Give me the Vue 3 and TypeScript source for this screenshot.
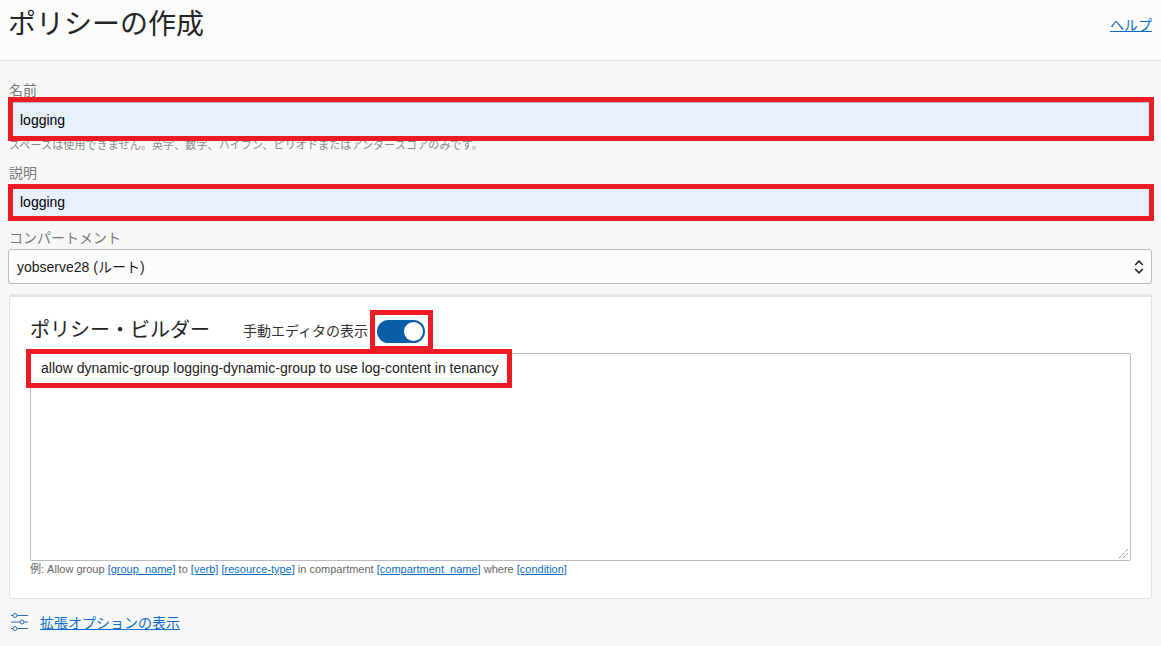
<script setup lang="ts">
const policy = 'allow dynamic-group logging-dynamic-group to use log-content in tenancy'
</script>

<template>
  <div class="page">
    <header class="head">
      <h1>ポリシーの作成</h1>
      <a class="link help">ヘルプ</a>
    </header>
    <main class="body">
      <label class="lbl first">名前</label>
      <div class="field name"><span>logging</span><i class="mark"></i></div>
      <p class="hint">スペースは使用できません。英字、数字、ハイフン、ピリオドまたはアンダースコアのみです。</p>
      <label class="lbl desc-l">説明</label>
      <div class="field desc"><span>logging</span><i class="mark"></i></div>
      <label class="lbl comp-l">コンパートメント</label>
      <div class="select">
        <span>yobserve28 (ルート)</span>
        <svg width="10" height="16" viewBox="0 0 10 16" fill="none" stroke="#222" stroke-width="1.6"><path d="M1.200 6 5 2.200 8.800 6M1.200 10 5 13.800 8.800 10" /></svg>
      </div>
      <section class="card">
        <div class="card-head">
          <h2>ポリシー・ビルダー</h2>
          <span class="tg-label">手動エディタの表示</span>
          <span class="toggle"><b></b><i class="mark tg-mark"></i></span>
        </div>
        <div class="area">
          <div class="code"><span>{{ policy }}</span><i class="mark code-mark"></i></div>
          <svg class="grip" width="9" height="9" viewBox="0 0 9 9" stroke="#666" stroke-width="1" stroke-dasharray="1 1"><path d="M0 9 9 0M4 9 9 4" /></svg>
        </div>
        <p class="example">例: Allow group <a>[group_name]</a> to <a>[verb]</a> <a>[resource-type]</a> in compartment <a>[compartment_name]</a> where <a>[condition]</a></p>
      </section>
      <div class="adv">
        <svg width="18" height="18" viewBox="0 0 18 18" fill="none" stroke="#2a6fb5" stroke-width="1">
          <path d="M1 2.500H3M7 2.500H18M1 9H10M14 9H18M1 15.500H3M7 15.500H18" />
          <circle cx="5" cy="2.500" r="2" /><circle cx="12" cy="9" r="2" /><circle cx="5" cy="15.500" r="2" />
        </svg>
        <a class="link">拡張オプションの表示</a>
      </div>
    </main>
  </div>
</template>

<style>
html, body { margin: 0; background: #f7f7f7; }
</style>

<style scoped>
.page {
  width: 1161px; height: 646px; overflow: hidden; background: #f7f7f7;
  font-family: "Liberation Sans", "Noto Sans CJK JP", sans-serif; font-size: 14px; color: #1a1a1a;
}
.head {
  height: 60px; background: #fcfcfc; border-bottom: 1px solid #e4e4e4;
  display: flex; justify-content: space-between; padding: 0 9px;
}
h1 { margin: 5px 0 0 -1px; font-size: 28px; line-height: 40px; font-weight: 400; color: #252525; }
.link { color: #0b6fc9; text-decoration: underline; }
.help { line-height: 20px; margin-top: 15px; }
.body { padding: 0 9px; display: flex; flex-direction: column; }
.lbl { display: block; color: #7a7a7a; line-height: 20px; font-size: 14px; }
.first { margin-top: 19px; height: 22px; }
.field {
  position: relative; box-sizing: border-box; background: #e8f0fe; color: #000; width: 1143px;
  border-top: 1px solid #b5b8c2; display: flex; align-items: center; padding-left: 11px;
}
.name { height: 35px; }
.desc { height: 30px; padding-bottom: 2px; }
.mark { position: absolute; border: 5px solid #ed1c24; pointer-events: none; box-sizing: border-box; }
.name .mark { inset: -6px -2px -4px -1px; }
.desc .mark { inset: -4px -2px -4px -1px; }
.hint { margin: 1px 0 0; font-size: 11px; line-height: 14px; letter-spacing: .12px; color: #8a8a8a; height: 25px; }
.desc-l { height: 20px; margin-bottom: 4px; }
.comp-l { margin-top: 11px; height: 21px; }
.select {
  box-sizing: border-box; height: 35px; width: 1144px; margin-left: -1px; background: #fcfcfc;
  border: 1px solid #b8bac4; border-radius: 3px; display: flex; align-items: center;
  justify-content: space-between; padding: 0 7px 2px 8px; color: #1a1a1a; flex: none;
}
.select svg { margin-top: 2px; }
.card {
  box-sizing: border-box; margin-top: 10px; height: 305px; background: #fff; border: 1px solid #e2e3e8;
  border-top: 3px solid #e4e4e7; border-radius: 3px; padding: 0 20px; flex: none;
}
.card-head { box-sizing: border-box; display: flex; align-items: center; height: 56px; padding-top: 13px; }
h2 { margin: -4px 0 0; font-size: 20px; line-height: 28px; font-weight: 400; color: #252525; width: 213px; }
.tg-label { color: #333; white-space: nowrap; width: 134px; margin-top: -4px; }
.toggle { position: relative; display: block; width: 48px; height: 23px; border-radius: 12px; background: #0a5ea8; }
.toggle b { position: absolute; right: 2px; top: 2px; width: 19px; height: 19px; border-radius: 50%; background: #fff; }
.tg-mark { inset: -10px -8px -8px -7px; }
.area {
  position: relative; box-sizing: border-box; height: 208px; background: #fff;
  border: 1px solid #b8bac4; border-radius: 2px;
}
.code { position: relative; display: inline-block; margin: 5px 0 0 10px; line-height: 18px; color: #222; }
.code-mark { inset: -10px -13px -11px -15px; }
.grip { position: absolute; right: 2px; bottom: 2px; }
.example { margin: 1px 0 0; font-size: 11px; line-height: 14px; color: #666; }
.example a { color: #0b6fc9; text-decoration: underline; }
.adv { display: flex; align-items: center; gap: 12px; margin-top: 13px; height: 20px; padding-left: 1px; }
</style>
